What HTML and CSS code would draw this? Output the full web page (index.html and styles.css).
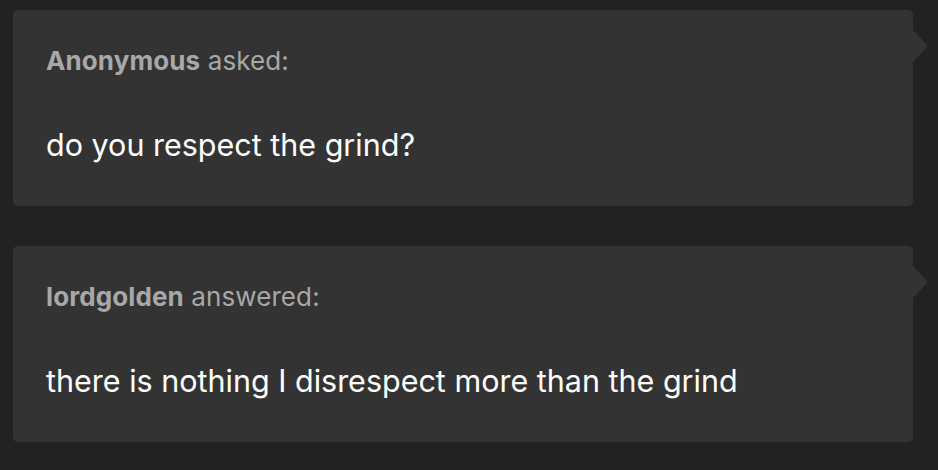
FILE: index.html
```html
<!DOCTYPE html>
<html>
<head>
<meta charset="utf-8">
<link rel="stylesheet" href="styles.css">
</head>
<body>
<div class="thread">
  <div class="bubble">
    <div class="meta"><span class="name">Anonymous</span> asked:</div>
    <div class="text">do you respect the grind?</div>
  </div>
  <div class="bubble">
    <div class="meta"><span class="name">lordgolden</span> answered:</div>
    <div class="text">there is nothing I disrespect more than the grind</div>
  </div>
</div>
</body>
</html>
```
FILE: styles.css
```css
html, body {
  margin: 0;
  padding: 0;
  background: #222222;
}
body {
  font-family: Inter, "Noto Sans", sans-serif;
  width: 938px;
  height: 470px;
  overflow: hidden;
}
.thread {
  display: flex;
  flex-direction: column;
  gap: 40px;
  padding: 10px 0 0 13px;
}
.bubble {
  position: relative;
  width: 900px;
  height: 196px;
  box-sizing: border-box;
  background: #333333;
  border-radius: 5px;
  padding: 0 33px;
  display: flex;
  flex-direction: column;
}
.bubble::after {
  content: "";
  position: absolute;
  left: 100%;
  top: 20px;
  border-top: 16px solid transparent;
  border-bottom: 16px solid transparent;
  border-left: 15px solid #333333;
}
.meta {
  color: #a8a8a8;
  font-size: 26px;
  line-height: 32px;
  margin-top: 35px;
  letter-spacing: 0.1px;
}
.name {
  font-weight: 700;
}
.text {
  color: #ffffff;
  font-size: 30.5px;
  line-height: 36px;
  margin-top: 50px;
}
```
